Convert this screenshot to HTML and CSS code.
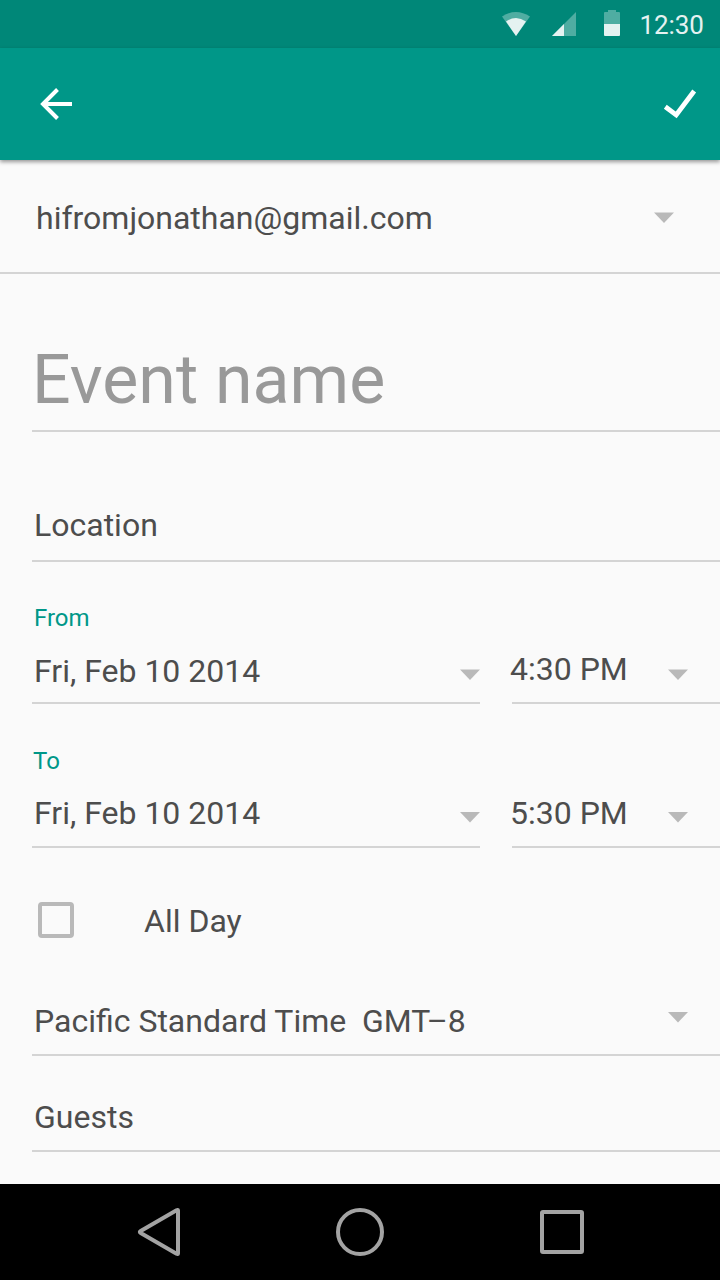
FILE: index.html
```html
<!DOCTYPE html>
<html lang="en">
<head>
<meta charset="utf-8">
<title>New event</title>
<link rel="stylesheet" href="styles.css">
</head>
<body>
<div class="screen">
  <header class="status">
    <svg class="status-icons" width="130" height="48" viewBox="500 0 130 48">
      <path d="M502 16.500Q516 7.500 530 16.500L516 36Z" fill="#4fada2"/>
      <path d="M506 21.500Q516 14.500 526 21.500L516 36Z" fill="#e5f2f1"/>
      <path d="M576 12V36H552Z" fill="#4fada2"/>
      <path d="M564 24V36H552Z" fill="#e5f2f1"/>
      <path d="M608 10h8v2h3q1 0 1 1v11h-16V13q0-1 1-1h3Z" fill="#4fada2"/>
      <path d="M604 24h16v11q0 1-1 1h-14q-1 0-1-1Z" fill="#e5f2f1"/>
    </svg>
    <span class="clock">12:30</span>
  </header>
  <nav class="toolbar">
    <svg width="36" height="36" viewBox="0 0 36 36"><path d="M34 18H6M19.500 3.500L5 18l14.500 14.500" fill="none" stroke="#fff" stroke-width="4"/></svg>
    <svg width="36" height="36" viewBox="0 0 36 36"><path d="M3.300 20.800L14.200 28.900L32.200 5" fill="none" stroke="#fff" stroke-width="4.800"/></svg>
  </nav>
  <main class="form">
    <div class="account">
      <span class="text">hifromjonathan@gmail.com</span>
      <svg class="caret" width="20" height="11" viewBox="0 0 20 11"><path d="M0 0.500H20L10 11Z"/></svg>
    </div>
    <div class="field title"><span class="title-text">Event name</span></div>
    <div class="field location"><span class="text">Location</span></div>
    <section class="when from">
      <div class="label">From</div>
      <div class="pair">
        <div class="date"><span class="text">Fri, Feb 10 2014</span><svg class="caret" width="20" height="11" viewBox="0 0 20 11"><path d="M0 0.500H20L10 11Z"/></svg></div>
        <div class="time"><span class="text">4:30 PM</span><svg class="caret" width="20" height="11" viewBox="0 0 20 11"><path d="M0 0.500H20L10 11Z"/></svg></div>
      </div>
    </section>
    <section class="when to">
      <div class="label">To</div>
      <div class="pair">
        <div class="date"><span class="text">Fri, Feb 10 2014</span><svg class="caret" width="20" height="11" viewBox="0 0 20 11"><path d="M0 0H20L10 10.500Z"/></svg></div>
        <div class="time"><span class="text">5:30 PM</span><svg class="caret" width="20" height="11" viewBox="0 0 20 11"><path d="M0 0H20L10 10.500Z"/></svg></div>
      </div>
    </section>
    <div class="all-day"><span class="checkbox"></span><span class="text">All Day</span></div>
    <div class="field zone">
      <span class="text">Pacific Standard Time&nbsp; GMT–8</span>
      <svg class="caret" width="20" height="11" viewBox="0 0 20 11"><path d="M0 0H20L10 10.500Z"/></svg>
    </div>
    <div class="field guests"><span class="text">Guests</span></div>
  </main>
  <footer class="navbar">
    <svg width="720" height="96" viewBox="0 0 720 96" fill="none" stroke="#a3a3a3" stroke-width="4">
      <path d="M178 26.500V69.500Q178 70.500 176.500 69.800L140.700 49Q139 48 140.700 47L176.500 26.200Q178 25.500 178 26.500Z"/>
      <circle cx="360" cy="48" r="22"/>
      <rect x="542" y="28" width="40" height="40" rx="1"/>
    </svg>
  </footer>
</div>
</body>
</html>
```
FILE: styles.css
```css
* { box-sizing: border-box; }
body { margin: 0; font-family: Roboto, "Liberation Sans", sans-serif; background: #fafafa; }
svg { display: block; flex: none; }
.screen { width: 720px; height: 1280px; display: flex; flex-direction: column; overflow: hidden; }
.status { height: 48px; background: #008778; display: flex; justify-content: flex-end; }
.status-icons { margin-right: 9.5px; }
.clock { width: 80.5px; font-size: 26px; line-height: 50px; letter-spacing: -.1px; color: #e5f2f1; }
.toolbar { height: 112px; background: #009788; display: flex; justify-content: space-between; align-items: center; padding: 0 22px 0 38px; box-shadow: 0 2px 4px rgba(0, 0, 0, .4); }
.form { flex: 1; display: flex; flex-direction: column; }
.text { font-size: 32px; line-height: 40px; color: #4d4d4d; white-space: nowrap; }
.caret { fill: #b9b9b9; }
.account, .field, .date, .time { display: flex; justify-content: space-between; align-items: flex-end; border-bottom: 2px solid #d4d4d4; }
.account { height: 114px; padding: 0 46px 34px 36px; }
.account .caret { margin-bottom: 15px; }
.field { margin-left: 32px; padding-left: 2px; }
.title { height: 158px; padding-left: 0; padding-bottom: 10px; }
.title-text { font-size: 68px; line-height: 80px; color: #999; }
.location { height: 130px; padding-bottom: 15px; }
.when { padding-left: 32px; }
.from { height: 142px; padding-top: 41px; }
.to { height: 144px; padding-top: 42px; }
.label { font-size: 24px; line-height: 30px; padding-left: 2px; color: #009788; }
.to .label { padding-left: 1px; }
.pair { display: grid; grid-template-columns: 448px 208px; column-gap: 32px; }
.date, .time { padding-bottom: 13px; }
.from .pair { height: 71px; }
.to .pair { height: 72px; }
.from .date { padding-left: 2px; padding-bottom: 11px; }
.to .date { padding-left: 2px; }
.time { padding-right: 32px; }
.time .text { margin-left: -2px; }
.from .date .caret { margin-bottom: 11px; }
.from .time .caret { margin-bottom: 9px; }
.to .caret { margin-bottom: 10px; }
.all-day { height: 106px; padding: 53px 0 0 38px; display: flex; align-items: flex-start; }
.checkbox { width: 36px; height: 36px; margin: 1px 70px 0 0; border: 4px solid #b9b9b9; border-radius: 4px; }
.zone { height: 102px; padding: 0 32px 13px 2px; }
.zone .caret { margin-bottom: 18px; }
.guests { height: 96px; padding-bottom: 13px; }
.navbar { height: 96px; background: #000; }
```
